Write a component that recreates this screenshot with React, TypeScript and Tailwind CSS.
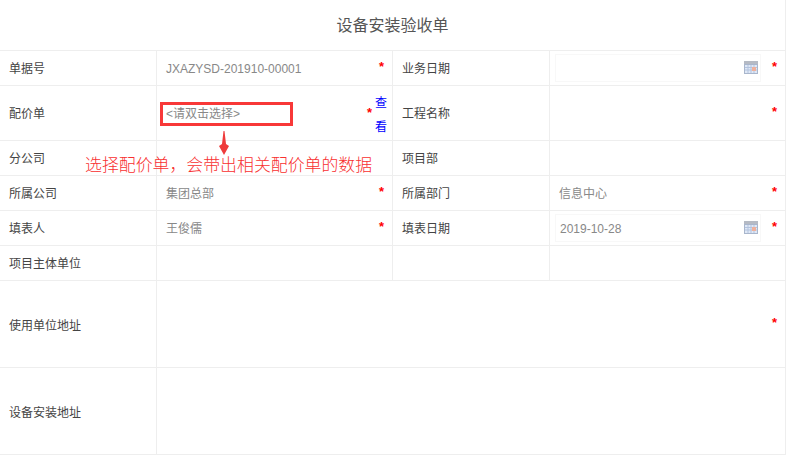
import React from "react";

const font = { fontFamily: '"Liberation Sans", "Noto Sans CJK SC", sans-serif' };

function Star() {
  return (
    <span className="absolute top-1/2 right-[8px] -translate-y-[8px] text-[13px] font-bold leading-[13px] text-[#ff0000]">*</span>
  );
}

function Calendar() {
  return (
    <svg width="14" height="13" viewBox="0 0 14 13" className="absolute right-[2px] top-[6px]">
      <rect x="0" y="0" width="14" height="13" fill="#a9b6cc" />
      <rect x="0" y="0" width="14" height="3" fill="#b5bac4" />
      <rect x="1" y="4" width="12" height="8" fill="#dfe8f6" />
      <path d="M1 6.5H13M1 9H13M4 4V12M7 4V12M10 4V12" stroke="#b3c3de" strokeWidth="1" fill="none" />
      <rect x="8" y="6" width="4" height="4" fill="#eeb09c" />
    </svg>
  );
}

function Label({ children, tall }: { children?: React.ReactNode; tall?: boolean }) {
  return (
    <div className={`flex items-center border-b border-r border-[#eeeeee] pl-[9px] text-[12px] text-[#444444] ${tall ? "pt-[4px]" : "pt-[2px]"}`}>
      {children}
    </div>
  );
}

function Value({ children, star, className = "" }: { children?: React.ReactNode; star?: boolean; className?: string }) {
  return (
    <div className={`relative flex items-center border-b border-r border-[#eeeeee] text-[12px] text-[#888888] ${className}`}>
      {children}
      {star && <Star />}
    </div>
  );
}

function DateField({ value }: { value?: string }) {
  return (
    <div className="relative ml-[5px] flex h-[28px] w-[206px] items-center border border-[#f8f8f8] pl-[4px] pt-[2px] text-[12px] text-[#888888]">
      {value}
      <Calendar />
    </div>
  );
}

export default function App() {
  return (
    <div className="relative h-[459px] w-[788px] overflow-hidden bg-white" style={font}>
      <div className="grid w-[786px] grid-cols-[157px_236px_157px_236px] grid-rows-[51px_35px_55px_35px_35px_35px_35px_87px_87px]">
        <div className="col-span-4 flex items-center justify-center border-b border-r border-[#eeeeee] pt-[2px] text-[16px] text-[#555555]">
          设备安装验收单
        </div>

        <Label>单据号</Label>
        <Value star className="pl-[9px] pt-[1px]">JXAZYSD-201910-00001</Value>
        <Label>业务日期</Label>
        <Value star><DateField /></Value>

        <Label>配价单</Label>
        <Value className="pl-[9px] pt-[2px]">
          &lt;请双击选择&gt;
          <span className="absolute right-[20px] top-1/2 -translate-y-[7px] text-[13px] font-bold leading-[13px] text-[#ff0000]">*</span>
          <a className="absolute right-[4px] top-[5px] w-[13px] text-[12px] leading-[24px] text-[#0000ff]">查看</a>
        </Value>
        <Label>工程名称</Label>
        <Value star />

        <Label>分公司</Label>
        <Value />
        <Label>项目部</Label>
        <Value />

        <Label>所属公司</Label>
        <Value star className="pl-[9px] pt-[2px]">集团总部</Value>
        <Label>所属部门</Label>
        <Value star className="pl-[9px] pt-[2px]">信息中心</Value>

        <Label>填表人</Label>
        <Value star className="pl-[9px] pt-[2px]">王俊儒</Value>
        <Label>填表日期</Label>
        <Value star><DateField value="2019-10-28" /></Value>

        <Label>项目主体单位</Label>
        <Value />
        <Label />
        <Value />

        <Label tall>使用单位地址</Label>
        <Value star className="col-span-3" />

        <Label tall>设备安装地址</Label>
        <Value className="col-span-3" />
      </div>

      {/* annotation overlay */}
      <div className="absolute left-[160px] top-[102px] h-[24px] w-[133px] border-[3px] border-[#f83838]" />
      <svg width="10" height="24" viewBox="0 0 10 24" className="absolute left-[219px] top-[131px]">
        <path d="M4.5 0H5.5L7 13L10 15L5 24L0 15L3 13Z" fill="#ee3b3b" />
      </svg>
      <div className="absolute left-[85px] top-[155px] whitespace-nowrap text-[16.9px] font-light leading-[22px] text-[#f83030]">
        选择配价单，会带出相关配价单的数据
      </div>
    </div>
  );
}
